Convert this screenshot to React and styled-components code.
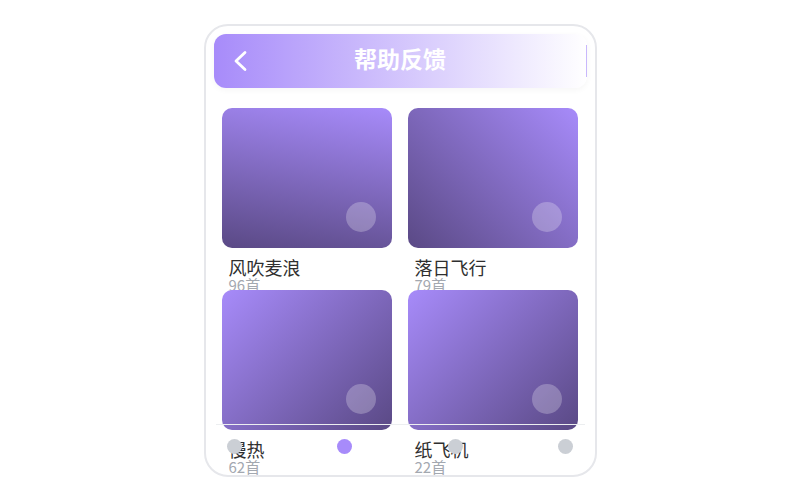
import React from 'react';
import styled, { createGlobalStyle } from 'styled-components';

const GlobalStyle = createGlobalStyle`
  html, body {
    margin: 0;
    padding: 0;
    background: #ffffff;
    font-family: "Noto Sans CJK SC", "Noto Sans", sans-serif;
  }
`;

const albums = [
  { name: '风吹麦浪', count: 96, angle: 190 },
  { name: '落日飞行', count: 79, angle: 225 },
  { name: '慢热', count: 62, angle: 135 },
  { name: '纸飞机', count: 22, angle: 135 },
];

const tabs = [false, true, false, false];

function App() {
  return (
    <>
      <GlobalStyle />
      <Page>
        <Phone>
          <Header>
            <BackButton>
              <svg width="24" height="24" viewBox="0 0 24 24" fill="none">
                <path d="M16 3.5 L7 12 L16 20.5" stroke="#fff" strokeWidth="2.8" strokeLinecap="round" strokeLinejoin="round" />
              </svg>
            </BackButton>
            <Title>帮助反馈</Title>
            <HeaderEdge />
          </Header>
          <Grid>
            {albums.map((a) => (
              <Item key={a.name}>
                <Cover $angle={a.angle}>
                  <PlayDot />
                </Cover>
                <Name>{a.name}</Name>
                <Count>{a.count}首</Count>
              </Item>
            ))}
          </Grid>
          <TabBar>
            {tabs.map((active, i) => (
              <TabDot key={i} $active={active} />
            ))}
          </TabBar>
        </Phone>
      </Page>
    </>
  );
}

const Page = styled.div`
  width: 800px;
  height: 500px;
  display: flex;
  align-items: center;
  justify-content: center;
`;

const Phone = styled.div`
  position: relative;
  box-sizing: border-box;
  width: 393px;
  height: 453px;
  border: 2px solid #e6e7eb;
  border-radius: 24px;
  padding: 8px;
  overflow: hidden;
  background: #fff;
`;

const Header = styled.div`
  height: 54px;
  border-radius: 12px;
  background: linear-gradient(90deg, #a78bfa 0%, #ffffff 100%);
  box-shadow: 0 2px 6px rgba(0, 0, 0, 0.04);
  display: grid;
  grid-template-columns: 1fr auto 1fr;
  align-items: center;
  padding: 0 15px;
`;

const BackButton = styled.div`
  display: flex;
  align-items: center;
  justify-self: start;
`;

const Title = styled.div`
  color: #fff;
  font-size: 23px;
  line-height: 1;
  padding-bottom: 4px;
  font-weight: 700;
`;

const HeaderEdge = styled.div`
  justify-self: end;
  margin-right: -15px;
  width: 1px;
  height: 32px;
  background: #c9b8fc;
`;

const Grid = styled.div`
  margin-top: 20px;
  padding: 0 8px;
  display: grid;
  grid-template-columns: 170px 170px;
  grid-auto-rows: 170px;
  column-gap: 16px;
  row-gap: 12px;
`;

const Item = styled.div`
  display: flex;
  flex-direction: column;
  min-height: 0;
`;

const Cover = styled.div`
  position: relative;
  height: 140px;
  flex-shrink: 0;
  border-radius: 10px;
  background: linear-gradient(${(p) => p.$angle}deg, #a78bfa 0%, #5a4985 100%);
`;

const PlayDot = styled.div`
  position: absolute;
  right: 16px;
  bottom: 16px;
  width: 30px;
  height: 30px;
  border-radius: 50%;
  background: rgba(255, 255, 255, 0.25);
`;

const Name = styled.div`
  margin-top: 9px;
  padding-left: 7px;
  font-size: 18px;
  line-height: 20px;
  color: #2f2f2f;
  white-space: nowrap;
`;

const Count = styled.div`
  padding-left: 7px;
  font-size: 15px;
  line-height: 15px;
  color: #a3a8b0;
  white-space: nowrap;
`;

const TabBar = styled.div`
  position: absolute;
  left: 10px;
  right: 10px;
  bottom: 0;
  height: 51px;
  box-sizing: border-box;
  border-top: 1px solid #eceef0;
  padding: 14px 11px 0;
  display: flex;
  justify-content: space-between;
  align-items: flex-start;
`;

const TabDot = styled.div`
  width: 15px;
  height: 15px;
  border-radius: 50%;
  background: ${(p) => (p.$active ? '#a78bfa' : '#cbcfd5')};
`;

export default App;
